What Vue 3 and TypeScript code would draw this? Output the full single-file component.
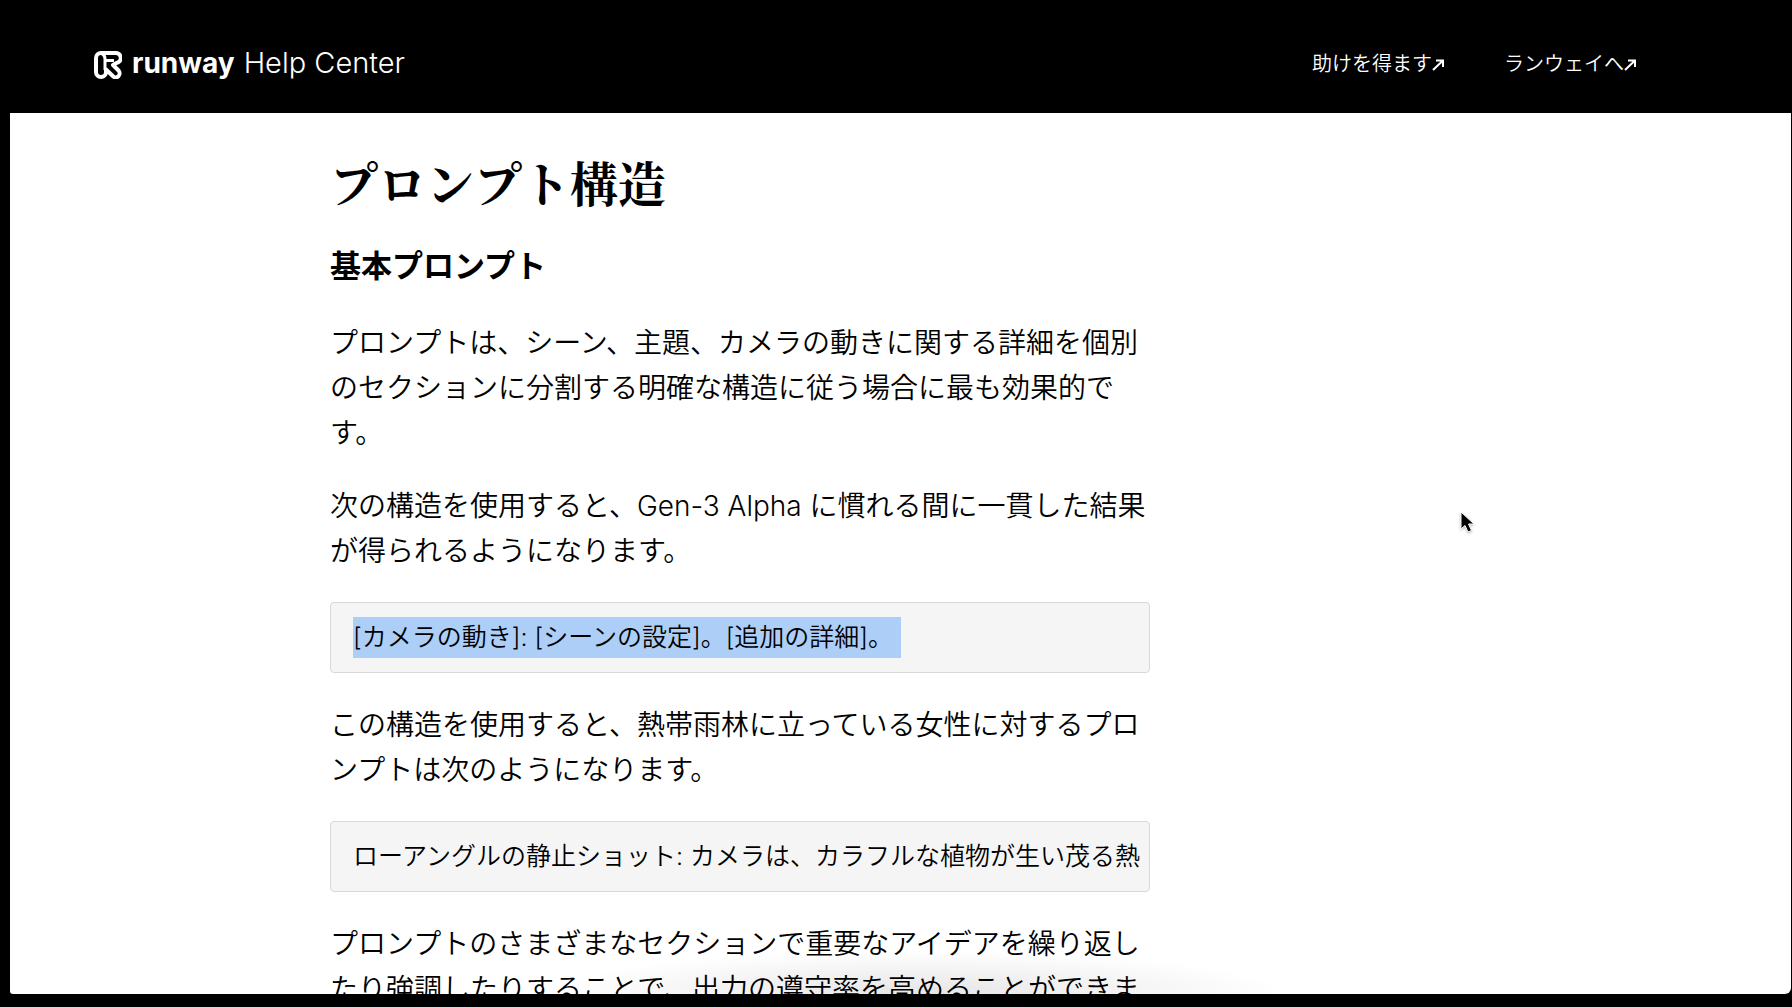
<script setup lang="ts">
interface NavLink {
  label: string
  href: string
}

const links: NavLink[] = [
  { label: '助けを得ます', href: '#support' },
  { label: 'ランウェイへ', href: '#runway' },
]
</script>

<template>
  <div class="page">
    <header class="topbar">
      <a class="brand" href="#home">
        <svg class="mark" viewBox="0 0 28 28" fill="none" stroke="#fff" stroke-width="4" stroke-linejoin="round" aria-hidden="true">
          <path d="M7 2H21A5 5 0 0 1 22.500 12L19 14L24.500 19.500A4 4 0 0 1 19 25.300L12 18.500V21A5 5 0 0 1 2 21V7A5 5 0 0 1 7 2Z" />
          <path d="M8 3Q11 4 11 8V19M12 9.500H20" stroke-width="3" />
        </svg>
        <span class="name">runway</span>
        <span class="section">Help Center</span>
      </a>
      <nav class="links">
        <a v-for="link in links" :key="link.href" :href="link.href">
          {{ link.label }}<svg class="arrow" viewBox="0 0 12 12" fill="none" stroke="currentColor" stroke-width="2" aria-hidden="true">
            <path d="M1 11L11 1.500M4 1.500H11V8" />
          </svg>
        </a>
      </nav>
    </header>

    <main class="sheet">
      <article class="article">
        <h1>プロンプト構造</h1>
        <h2>基本プロンプト</h2>
        <p>プロンプトは、シーン、主題、カメラの動きに関する詳細を個別のセクションに分割する明確な構造に従う場合に最も効果的です。</p>
        <p>次の構造を使用すると、Gen-3 Alpha に慣れる間に一貫した結果が得られるようになります。</p>
        <pre><mark>[カメラの動き]: [シーンの設定]。[追加の詳細]。</mark></pre>
        <p>この構造を使用すると、熱帯雨林に立っている女性に対するプロンプトは次のようになります。</p>
        <pre>ローアングルの静止ショット: カメラは、カラフルな植物が生い茂る熱</pre>
        <p>プロンプトのさまざまなセクションで重要なアイデアを繰り返したり強調したりすることで、出力の遵守率を高めることができま</p>
      </article>
      <div class="shade"></div>
    </main>

    <svg class="pointer" viewBox="0 0 18 26" aria-hidden="true">
      <path d="M2 2V19L6 15.500L9 22L12.500 20.500L9.500 14H15Z" fill="#000" stroke="#fff" stroke-width="1" />
    </svg>
  </div>
</template>

<style>
body {
  margin: 0;
  background: #000;
}
</style>

<style scoped>
.page {
  position: relative;
  display: flex;
  flex-direction: column;
  box-sizing: border-box;
  height: 100vh;
  padding: 0 1px 13px 10px;
  overflow: hidden;
  background: #000;
  color: #000;
  font-family: Inter, "Noto Sans CJK JP", sans-serif;
}

.topbar {
  display: flex;
  flex: none;
  align-items: center;
  justify-content: space-between;
  box-sizing: border-box;
  height: 113px;
  padding: 14px 155px 0 84px;
}

.topbar a {
  color: #fff;
  text-decoration: none;
}

.brand {
  display: flex;
  align-items: center;
  padding-bottom: 2px;
  line-height: 36px;
}

.mark {
  width: 28px;
  height: 28px;
  margin: 4px 10px 0 0;
}

.name {
  margin-right: 9px;
  font-size: 28px;
  font-weight: 700;
}

.section {
  font-size: 29px;
  font-weight: 300;
}

.links {
  display: flex;
  gap: 60px;
  font-size: 20px;
  font-weight: 350;
  line-height: 30px;
}

.arrow {
  width: 12px;
  height: 12px;
}

.sheet {
  position: relative;
  flex: 1;
  min-height: 0;
  overflow: hidden;
  padding: 0 320px;
  border-radius: 0 0 6px 3px;
  background: #fff;
}

.article {
  max-width: 820px;
}

h1 {
  margin: 33px 0 0;
  font-family: "Noto Serif CJK JP", "Noto Sans CJK JP", serif;
  font-size: 48px;
  font-weight: 700;
  line-height: 72px;
}

h2 {
  margin: 24px 0 31px;
  font-size: 31px;
  font-weight: 700;
  line-height: 48px;
}

p {
  margin: 0 0 28px;
  font-size: 28px;
  font-weight: 350;
  line-height: 45px;
}

pre {
  box-sizing: border-box;
  height: 71px;
  margin: 0 0 30px;
  padding: 14px 0 14px 22px;
  overflow: hidden;
  border: 1px solid #d8d8d8;
  border-radius: 4px;
  background: #f5f5f5;
  font-family: inherit;
  font-size: 25px;
  font-weight: 350;
  line-height: 41px;
}

mark {
  display: inline-block;
  padding-right: 8px;
  background: #accef7;
  color: inherit;
}

.shade {
  position: absolute;
  bottom: 0;
  left: 30%;
  width: 42%;
  height: 44px;
  background: radial-gradient(ellipse at bottom, rgba(0, 0, 0, 0.1), rgba(0, 0, 0, 0) 70%);
}

.pointer {
  position: absolute;
  top: 50.600%;
  left: 81.400%;
  width: 18px;
  height: 26px;
  filter: drop-shadow(0 1px 1px rgba(0, 0, 0, 0.3));
}
</style>
